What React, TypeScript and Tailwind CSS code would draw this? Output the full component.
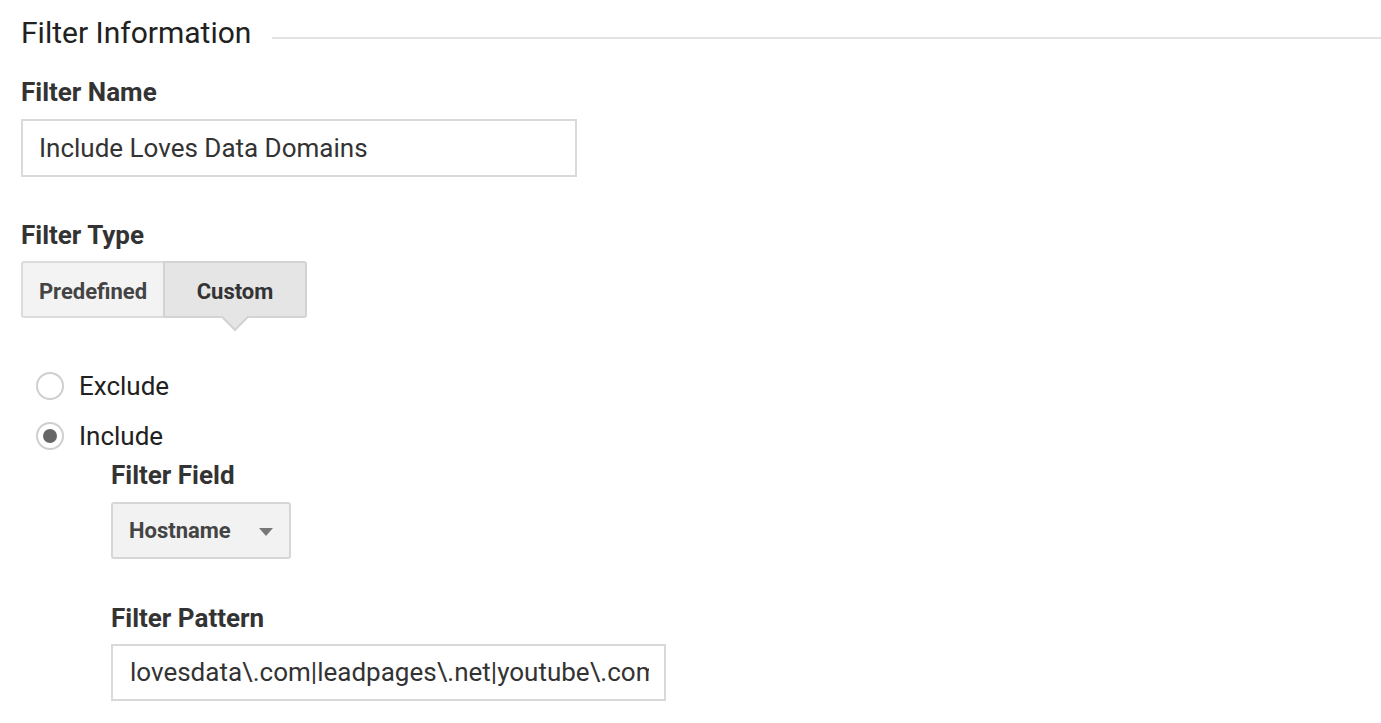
import React from 'react';

const font = { fontFamily: 'Roboto, "Noto Sans", Arial, sans-serif' };

function Label({ children, className = '' }: { children: React.ReactNode; className?: string }) {
  return <div className={`text-[26px] font-bold leading-[30px] text-[#333] ${className}`}>{children}</div>;
}

function Radio({ label, checked }: { label: string; checked?: boolean }) {
  return (
    <div className="flex h-[48px] items-center">
      <div className="ml-[15px] flex h-[28px] w-[28px] items-center justify-center rounded-full border-2 border-[#cfcfcf] bg-white">
        {checked && <div className="h-[14px] w-[14px] rounded-full bg-[#666]" />}
      </div>
      <span className="ml-[15px] text-[26px] leading-[30px] text-[#212121]">{label}</span>
    </div>
  );
}

export default function App() {
  return (
    <div className="min-h-screen bg-white pl-[21px] pt-[16px]" style={font}>
      {/* section header */}
      <div className="flex h-[36px]">
        <h2 className="text-[30px] font-normal leading-[34px] text-[#212121]">Filter Information</h2>
        <div className="ml-[21px] mt-[21px] h-[2px] flex-1 bg-[#e3e3e3]" />
      </div>

      <Label className="mt-[25px]">Filter Name</Label>
      <div className="mt-[12px] flex h-[58px] w-[556px] items-center border-2 border-[#d9d9d9] pl-[16px] text-[26px] text-[#333]">
        Include Loves Data Domains
      </div>

      <Label className="mt-[43px]">Filter Type</Label>
      <div className="relative mt-[11px] flex h-[57px] w-[286px]">
        <div className="flex flex-1 items-center justify-center rounded-l-[3px] border-2 border-r-0 border-[#dcdcdc] bg-[#f3f3f3] pt-[3px] text-[22px] font-bold text-[#444]">
          Predefined
        </div>
        <div className="flex flex-1 items-center justify-center rounded-r-[3px] border-2 border-[#d3d3d3] bg-[#e5e5e5] pt-[3px] text-[22px] font-bold text-[#333]">
          Custom
        </div>
        {/* pointer under the selected tab */}
        <div className="absolute left-[204px] top-[46px] h-[20px] w-[20px] rotate-45 border-b-2 border-r-2 border-[#d3d3d3] bg-[#e5e5e5]" />
      </div>

      <div className="mt-[44px] flex flex-col gap-[2px]">
        <Radio label="Exclude" />
        <Radio label="Include" checked />
      </div>

      <div className="ml-[90px]">
        <Label>Filter Field</Label>
        <div className="mt-[12px] flex h-[57px] w-[180px] items-center rounded-[3px] border-2 border-[#d6d6d6] bg-[#f2f2f2] pl-[16px] pr-[16px]">
          <span className="text-[22px] font-bold text-[#444]">Hostname</span>
          <svg className="ml-auto mt-[2px]" width="14" height="8" viewBox="0 0 14 8">
            <path d="M0 0h14L7 8z" fill="#777" />
          </svg>
        </div>

        <Label className="mt-[44px]">Filter Pattern</Label>
        <div className="mt-[11px] flex h-[57px] w-[555px] items-center border-2 border-[#d9d9d9] pl-[17px] pr-[15px]">
          <div className="overflow-hidden whitespace-nowrap text-[26px] text-[#333]">
            lovesdata\.com|leadpages\.net|youtube\.com
          </div>
        </div>
      </div>
    </div>
  );
}
